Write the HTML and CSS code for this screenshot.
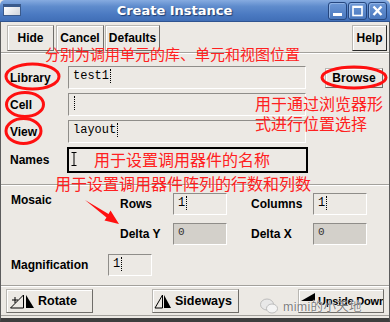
FILE: index.html
```html
<!DOCTYPE html>
<html>
<head>
<meta charset="utf-8">
<link rel="stylesheet" href="styles.css">
</head>
<body>
<div class="window">
  <div class="titlebar">
    <span class="win-icon"></span>
    <span class="title">Create Instance</span>
    <div class="wbtns">
      <span class="wbtn"><svg width="17" height="16" viewBox="0 0 17 16"><rect x="4" y="10" width="9" height="3" fill="#fff"/></svg></span>
      <span class="wbtn"><svg width="17" height="16" viewBox="0 0 17 16"><rect x="4" y="3.5" width="9" height="9" fill="none" stroke="#fff" stroke-width="1.6"/><rect x="4" y="3" width="9" height="2" fill="#fff"/></svg></span>
      <span class="wbtn"><svg width="17" height="16" viewBox="0 0 17 16"><path d="M4.5 3.5 L12.5 12 M12.5 3.5 L4.5 12" stroke="#fff" stroke-width="2.4"/></svg></span>
    </div>
  </div>
  <div class="content">
    <div class="toolbar">
      <button class="btn w-hide">Hide</button>
      <button class="btn w-cancel">Cancel</button>
      <button class="btn w-defaults">Defaults</button>
      <span class="spacer"></span>
      <button class="btn w-help">Help</button>
    </div>
    <div class="sep"></div>

    <div class="fields">
      <div class="row">
        <span class="label">Library</span>
        <div class="entry">test1<span class="caret"></span></div>
        <button class="btn browse">Browse</button>
      </div>
      <div class="row">
        <span class="label">Cell</span>
        <div class="entry"><span class="caret"></span></div>
      </div>
      <div class="row">
        <span class="label">View</span>
        <div class="entry">layout<span class="caret"></span></div>
      </div>
      <div class="row names">
        <span class="label">Names</span>
        <div class="entry focus"><svg class="ibeam" width="6" height="14" viewBox="0 0 6 14"><path d="M0.5 0.5 H5.5 M3 0.5 V13.5 M0.5 13.5 H5.5" stroke="#000" stroke-width="1"/></svg></div>
      </div>
    </div>

    <div class="sep sep2"></div>

    <div class="mosaic">
      <span class="label mosaic-label">Mosaic</span>
      <span class="label">Rows</span>
      <div class="entry small">1<span class="caret"></span></div>
      <span></span>
      <span class="label">Columns</span>
      <div class="entry small">1<span class="caret"></span></div>
      <span></span>
      <span class="label">Delta Y</span>
      <div class="entry small disabled">0</div>
      <span></span>
      <span class="label">Delta X</span>
      <div class="entry small disabled">0</div>
    </div>

    <div class="mag-row">
      <span class="label mag-label">Magnification</span>
      <div class="entry small mag">1<span class="caret"></span></div>
    </div>

    <div class="sep sep3"></div>

    <div class="actions">
      <button class="btn action rotate">
        <svg width="26" height="15" viewBox="0 0 26 15"><path d="M14.5 1 V14 H1.5 Z" fill="none" stroke="#000" stroke-width="1"/><path d="M3 6 H9 M6 3 V9" stroke="#000" stroke-width="1"/><path d="M17 1 V14 H25 Z" fill="#000"/></svg>
        <span>Rotate</span>
      </button>
      <button class="btn action sideways">
        <svg width="18" height="15" viewBox="0 0 18 15"><path d="M8.5 1 V14 H1 Z" fill="none" stroke="#000" stroke-width="1"/><path d="M10 1 V14 H17 Z" fill="#000"/></svg>
        <span>Sideways</span>
      </button>
      <button class="btn action upside">
        <svg width="17" height="15" viewBox="0 0 17 15"><path d="M1 9 L15 1 V9 Z" fill="#000"/></svg>
        <span class="upside-text">Upside Down</span>
      </button>
    </div>
  </div>

  <div class="note n1">分别为调用单元的库、单元和视图位置</div>
  <div class="note n2">用于通过浏览器形<br>式进行位置选择</div>
  <div class="note n3">用于设置调用器件的名称</div>
  <div class="note n4">用于设置调用器件阵列的行数和列数</div>

  <svg class="marks" width="390" height="322" viewBox="0 0 390 322">
    <ellipse cx="32.5" cy="76.5" rx="26.5" ry="12.5" fill="none" stroke="#ff1010" stroke-width="3"/>
    <ellipse cx="25" cy="104.5" rx="18.5" ry="12" fill="none" stroke="#ff1010" stroke-width="3"/>
    <ellipse cx="23.5" cy="131" rx="17.5" ry="12.5" fill="none" stroke="#ff1010" stroke-width="3"/>
    <ellipse cx="354" cy="77.5" rx="32" ry="10.5" fill="none" stroke="#ff1010" stroke-width="3"/>
    <polygon points="85,200 108.5,214 110.5,210.5 119,224 104.5,220.5 106.5,217.5" fill="#ff1010"/>
  </svg>

  <div class="watermark">
    <svg width="18" height="16" viewBox="0 0 18 16"><ellipse cx="7" cy="6.5" rx="6.5" ry="5.5" fill="#e8e8e8" stroke="#b0b0b0" stroke-width="0.8"/><ellipse cx="12" cy="10.5" rx="5.5" ry="4.5" fill="#f4f4f4" stroke="#b0b0b0" stroke-width="0.8"/></svg>
    <span>mimi的小天地</span>
  </div>
</div>
</body>
</html>
```
FILE: styles.css
```css
* { box-sizing: border-box; }
html, body { margin: 0; padding: 0; }
body {
  width: 390px;
  height: 322px;
  overflow: hidden;
  background: #ece9e4;
  font-family: "Liberation Sans", Arial, sans-serif;
}
.window {
  position: relative;
  width: 390px;
  height: 322px;
  background: #ece9e4;
}

/* title bar */
.titlebar {
  height: 22px;
  display: flex;
  align-items: center;
  padding: 0 3px 0 3px;
  background: linear-gradient(#86abe0 0, #5f8ccd 30%, #4a79c1 70%, #416fb7 100%);
  border-radius: 5px 5px 0 0;
  border-bottom: 1px solid #2f5490;
}
.win-icon {
  width: 18px;
  height: 12px;
  margin-top: -1px;
  border: 1px solid #3a5a8c;
  border-top: 3px solid #3a5a8c;
  background: linear-gradient(135deg, #ffffff, #cfd4dc);
}
.title {
  flex: 1;
  text-align: center;
  color: #fff;
  font-family: "DejaVu Sans", sans-serif;
  font-weight: bold;
  font-size: 13px;
  text-shadow: 1px 1px 1px #1e3c6e;
}
.wbtns { display: flex; gap: 1px; }
.wbtn {
  width: 19px;
  height: 18px;
  border: 1px solid #25467e;
  border-radius: 3px;
  background: linear-gradient(#6c97d6, #4a78be);
  box-shadow: inset 1px 1px 0 #8fb2e4;
  display: flex;
  align-items: center;
  justify-content: center;
}
.wbtn svg { display: block; }

/* content */
.content {
  height: 300px;
  border-left: 1px solid #5c5c5c;
  border-right: 1px solid #5c5c5c;
  border-bottom: 4px solid #3e3e3e;
  box-shadow: inset 0 -2px 0 #ece9e4, inset 0 -3px 0 #a3a19c;
}

.btn {
  font-family: "Liberation Sans", Arial, sans-serif;
  font-weight: bold;
  font-size: 12px;
  color: #000;
  background: #ece9e4;
  border: 1px solid;
  border-color: #b9b7b2 #6f6d69 #6f6d69 #b9b7b2;
  box-shadow: inset 1px 1px 0 #ffffff;
  padding: 0;
  margin: 0;
  display: flex;
  align-items: center;
  justify-content: center;
}

.toolbar {
  display: flex;
  padding: 3px 2px 0 6px;
  gap: 1px;
}
.toolbar .btn { height: 26px; }
.w-hide { width: 47px; }
.w-cancel { width: 48px; margin-left: 1px; }
.w-defaults { width: 55px; }
.w-help { width: 35px; border-color: #b9b7b2 #2a2a2a #2a2a2a #b9b7b2; }
.spacer { flex: 1; }

.sep {
  height: 2px;
  border-top: 1px solid #a3a19c;
  border-bottom: 1px solid #ffffff;
  margin-top: 1px;
}

.label {
  font-weight: bold;
  font-size: 12px;
  line-height: 14px;
  color: #000;
}

.entry {
  font-family: "Liberation Mono", monospace;
  font-size: 12px;
  color: #000;
  background: #ece9e4;
  border: 1px solid;
  border-color: #8f8d89 #ffffff #ffffff #8f8d89;
  display: flex;
  align-items: center;
  padding-left: 4px;
  padding-bottom: 3px;
}
.caret {
  display: inline-block;
  width: 3px;
  height: 14px;
  border-left: 1px dotted #000;
  margin-left: 1px;
}

.fields {
  margin-top: 12px;
  padding-left: 9px;
  display: flex;
  flex-direction: column;
  gap: 4px;
}
.row {
  display: flex;
  align-items: center;
  height: 23px;
}
.row .label { width: 58px; }
.row .entry { width: 238px; height: 23px; }
.browse {
  width: 58px;
  height: 20px;
  margin-left: 19px;
}
.row.names { height: 26px; }
.row.names .label { width: 57px; }
.entry.focus {
  width: 241px;
  height: 26px;
  border: 2px solid #000;
  padding-left: 2px;
  padding-bottom: 0;
}
.ibeam { display: block; margin-bottom: 2px; }

.sep2 { margin-top: 11px; }

.mosaic {
  margin-top: 7px;
  padding-left: 10px;
  display: grid;
  grid-template-columns: 109px 53px 54px 24px 62px 54px;
  grid-template-rows: 22px 22px;
  row-gap: 8px;
  align-items: center;
}
.mosaic-label { align-self: start; }
.entry.small { height: 22px; }
.entry.disabled {
  background: #d3d0ca;
  color: #333;
  font-size: 11px;
  padding-bottom: 5px;
}

.mag-row {
  margin-top: 9px;
  padding-left: 10px;
  display: flex;
  align-items: center;
}
.mag-label { width: 97px; }
.entry.mag { width: 44px; }

.sep3 { margin-top: 9px; }

.actions {
  margin-top: 2px;
  display: flex;
  justify-content: space-between;
  padding: 0 5px 0 5px;
}
.action {
  height: 24px;
  width: 87px;
  justify-content: flex-start;
  font-size: 12.5px;
  white-space: nowrap;
  overflow: hidden;
}
.action svg { display: block; flex: none; }
.rotate { padding-left: 2px; gap: 3px; }
.sideways { padding-left: 1px; gap: 3px; }
.upside { width: 86px; padding-left: 1px; gap: 1px; align-items: center; }
.upside svg { margin-top: -4px; }
.upside-text { font-size: 11px; letter-spacing: -0.2px; }

/* annotations */
.note {
  position: absolute;
  color: #ff2020;
  font-family: "Noto Sans CJK SC", sans-serif;
  line-height: 16px;
  white-space: nowrap;
}
.n1 { left: 45px; top: 46px; font-size: 15px; }
.n2 { left: 255px; top: 93px; font-size: 16px; line-height: 20px; }
.n3 { left: 94px; top: 151px; font-size: 16px; }
.n4 { left: 55px; top: 175px; font-size: 16px; }

.marks {
  position: absolute;
  left: 0;
  top: 0;
  pointer-events: none;
}

.watermark {
  position: absolute;
  left: 260px;
  top: 296px;
  display: flex;
  align-items: center;
  gap: 5px;
}
.watermark svg { display: block; }
.watermark span {
  font-family: "Liberation Sans", "Noto Sans CJK SC", sans-serif;
  font-size: 12.5px;
  color: #7c7c7c;
  text-shadow: 0 0 1px #fff, 0 0 1px #fff;
  letter-spacing: 0.3px;
}
```
